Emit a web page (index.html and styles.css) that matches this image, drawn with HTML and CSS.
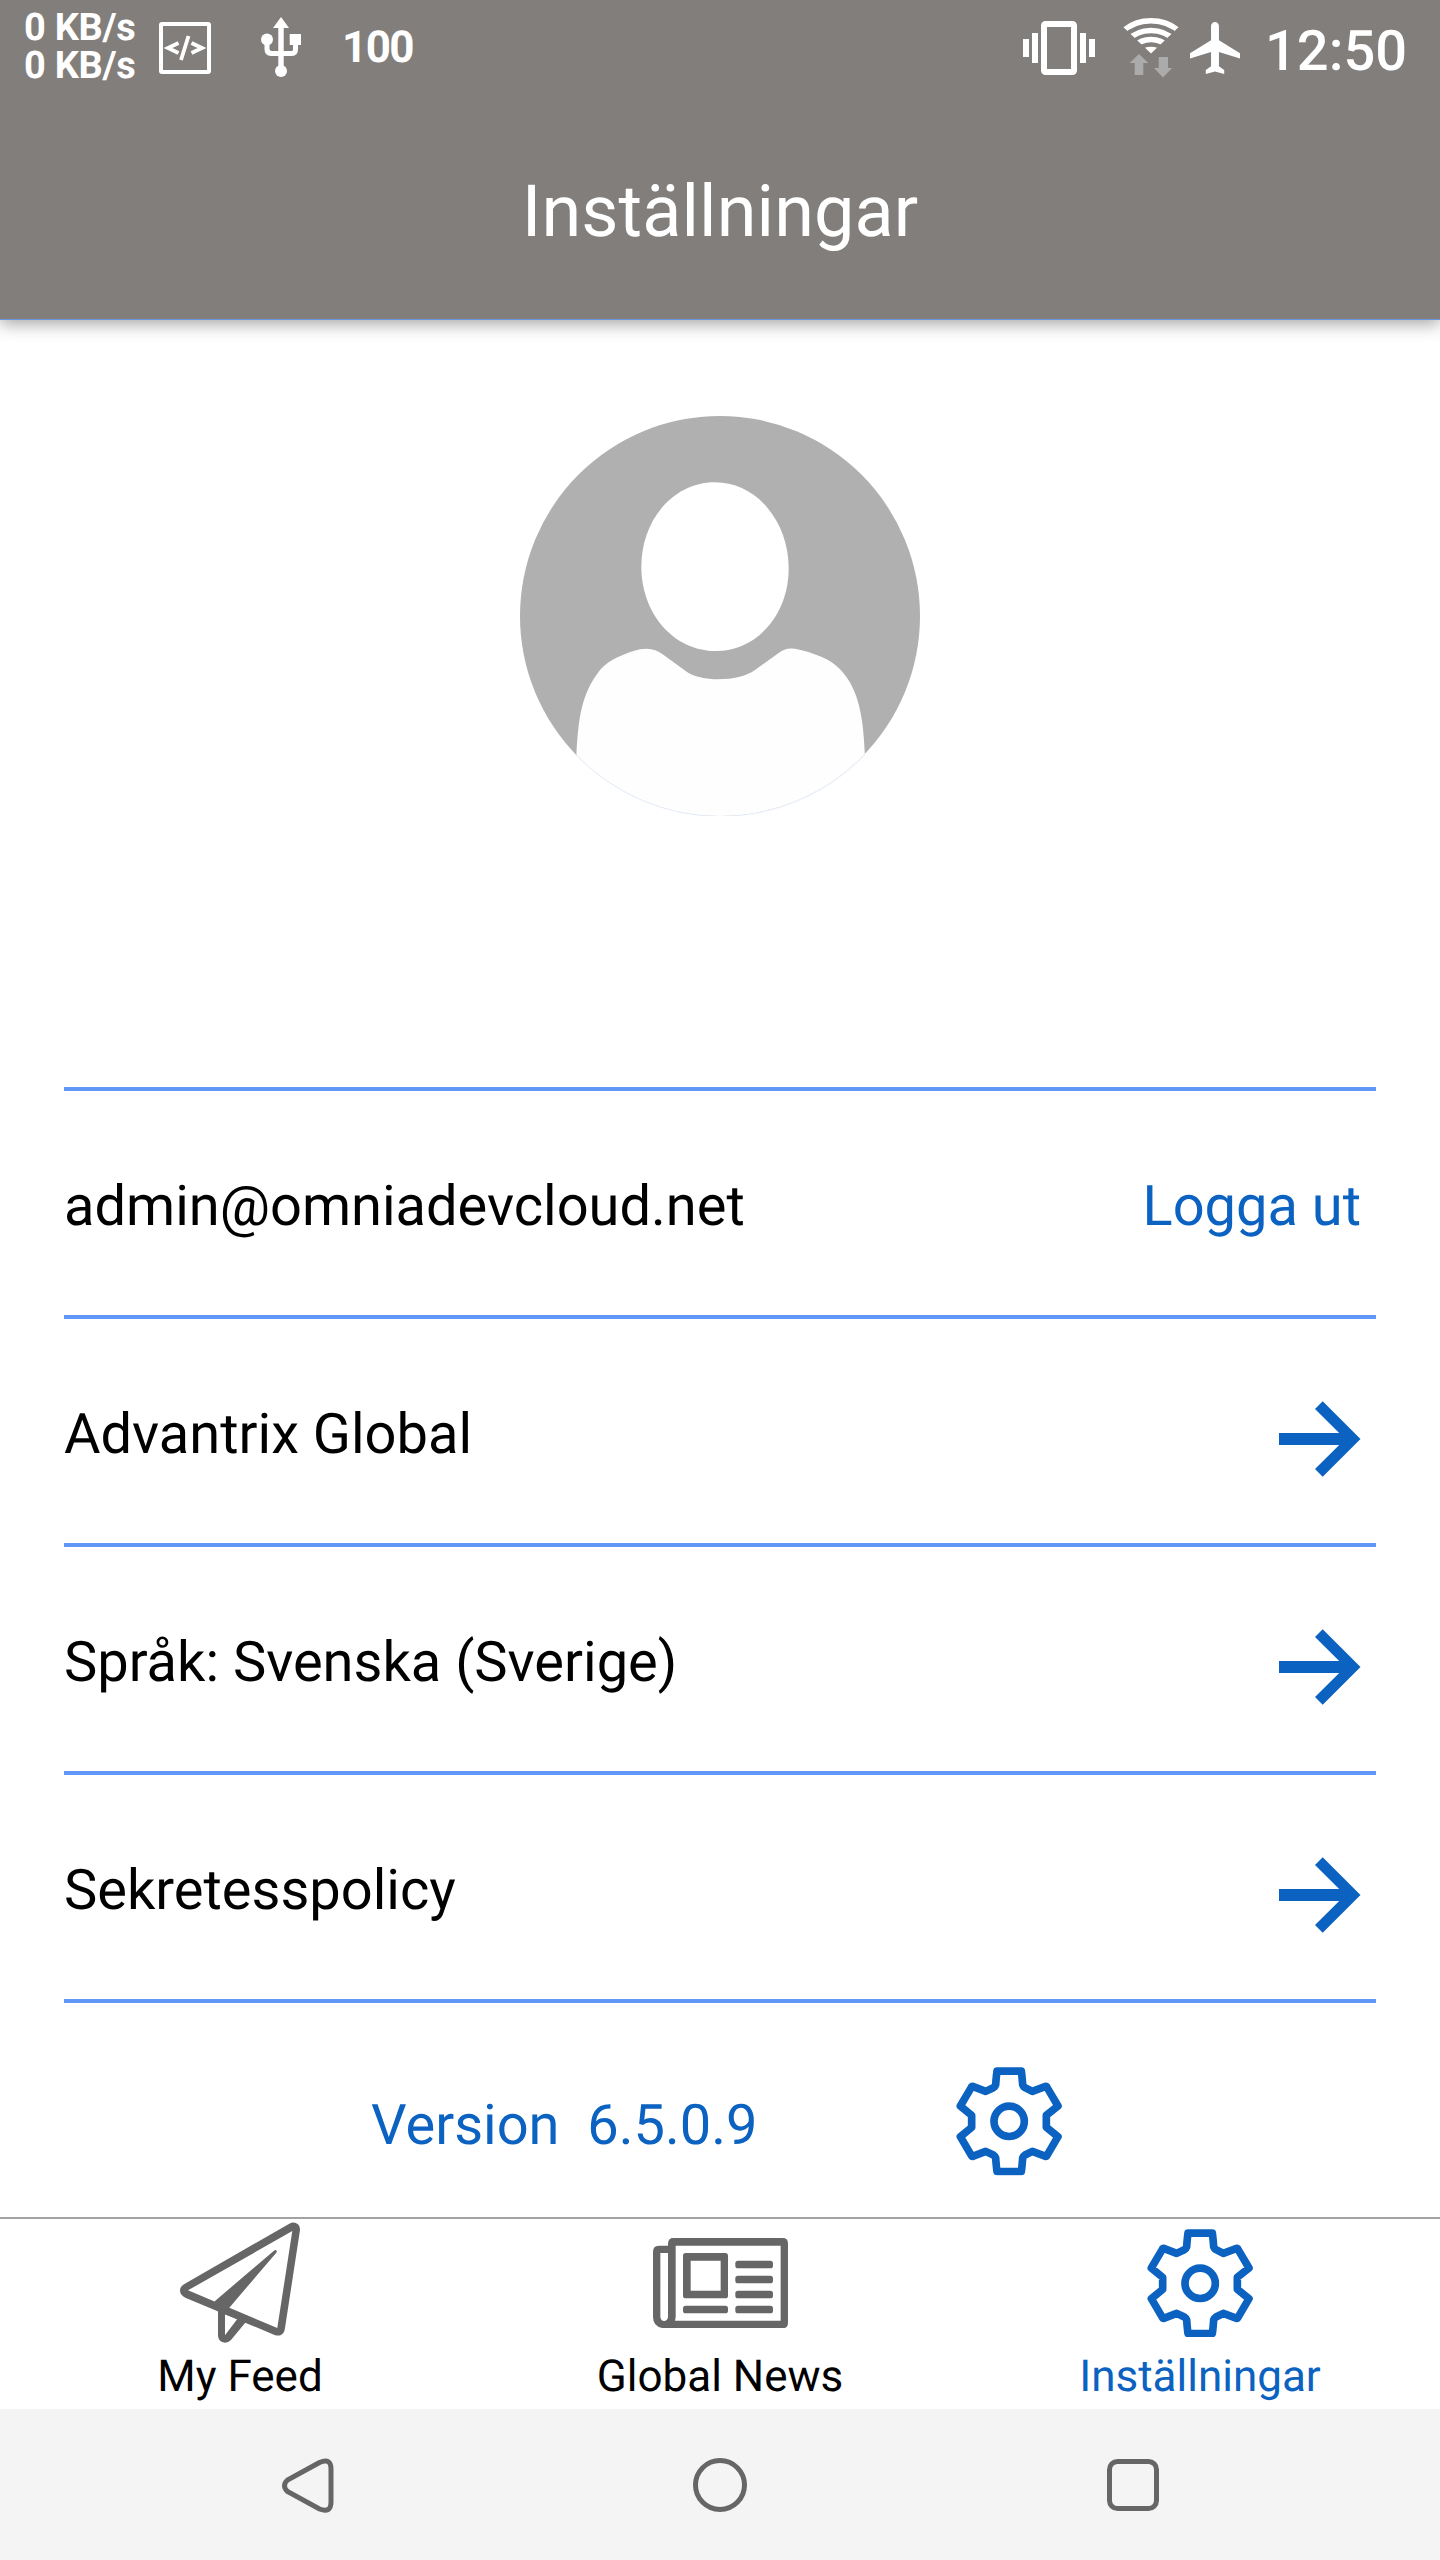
FILE: index.html
```html
<!DOCTYPE html>
<html lang="sv">
<head>
<meta charset="utf-8">
<title>Inställningar</title>
<link rel="stylesheet" href="styles.css">
</head>
<body>
<svg class="defs" aria-hidden="true">
  <symbol id="gear" viewBox="290 86 318 326">
    <path class="gear-line" d="M413 98.500H486Q488 112 490 139Q492 145 497 148L519 159L559 144Q562 144 563 147L596 203L561 231V267L596 295L563 351Q562 354 559 354L519 339L497 350Q492 353 490 359Q488 386 486 399.500H413Q411 386 409 359Q407 353 402 350L379 339L340 354Q337 354 336 351L303 295L337 267V231L303 203L336 147Q337 144 340 144L379 159L402 148Q407 145 409 139Q411 112 413 98.500Z"/>
    <circle class="gear-line" cx="449.500" cy="249" r="45.500"/>
  </symbol>
  <symbol id="arrow" viewBox="0 0 82 76">
    <path d="M81.500 38L43.700 .2L36 8L60.200 32H0V44H60.200L36 68L43.700 75.800Z"/>
  </symbol>
</svg>
<div class="screen">
  <header class="header">
    <div class="statusbar">
      <div class="speed"><span>0 KB/s</span><span>0 KB/s</span></div>
      <svg class="ic-code" viewBox="0 0 52 52"><rect x="2" y="2" width="48" height="48" rx="1" fill="none" stroke="#fff" stroke-width="4"/><path d="M19.500 21L9 26L19.500 31M32.500 21L43 26L32.500 31M29.500 14L22 38" fill="none" stroke="#fff" stroke-width="3.800"/></svg>
      <svg class="ic-usb" viewBox="261 17 40 60"><path d="M281 17L289 28H283.700V51H292Q293 51 293 49V45H289.700V34H301V45H298V49Q298 56 292 56H283.700V67H278.300V56H271Q264.500 56 264.500 49V44H269.500V49Q269.500 51 272 51H278.300V28H273Z"/><circle cx="267" cy="39.500" r="6"/><circle cx="281" cy="71" r="6"/></svg>
      <span class="battery">100</span>
      <span class="spacer"></span>
      <svg class="ic-vibrate" viewBox="1023 21 72 54"><rect x="1044" y="24" width="30" height="48" rx="1.500" fill="none" stroke="#fff" stroke-width="6"/><path d="M1032 33h6v30h-6zM1023 39h6v18h-6zM1080 33h6v30h-6zM1089 39h6v18h-6z"/></svg>
      <svg class="ic-wifi" viewBox="1123 17 56 61"><clipPath id="fan"><path d="M1151 53.500L1118 22V0H1184V22Z"/></clipPath><g clip-path="url(#fan)" fill="none" stroke="#fff" stroke-width="5.500"><circle cx="1151" cy="64.500" r="43.700"/><circle cx="1151" cy="64.500" r="34"/><circle cx="1151" cy="64.500" r="25"/><circle cx="1151" cy="64.500" r="17.800" fill="#fff" stroke="none"/></g><path fill="#ababab" d="M1139 54L1148.300 63H1143.300V75H1134.700V63H1129.700ZM1163 77.500L1154 68H1158.700V57H1168V68H1172Z"/></svg>
      <svg class="ic-plane" viewBox="2 2 19 20" preserveAspectRatio="none"><path d="M21 16v-2l-8-5V3.500c0-.83-.67-1.500-1.500-1.500S10 2.670 10 3.500V9l-8 5v2l8-2.500V19l-2 1.500V22l3.500-1 3.500 1v-1.500L13 19v-5.500l8 2.500z"/></svg>
      <span class="clock">12:50</span>
    </div>
    <h1 class="title">Inställningar</h1>
  </header>

  <main class="content">
    <svg class="avatar" viewBox="60 48 1200 1200">
      <clipPath id="disc"><circle cx="660" cy="648" r="600"/></clipPath>
      <g clip-path="url(#disc)">
        <rect x="60" y="48" width="1200" height="1200" fill="#b0b0b0"/>
        <path fill="#fff" d="M645 247C770 247 866 365 866 505C866 645 770 753 648 753C520 753 424 640 424 500C424 360 520 247 645 247Z"/>
        <path fill="#fefefe" d="M229 1070C235 950 245 880 300 810C330 777 375 760 420 748Q460 740 490 764L560 815C600 845 715 847 765 810L835 760Q855 742 885 746C940 758 990 775 1020 808C1080 870 1090 960 1095 1070V1260H229Z"/>
      </g>
      <path d="M229 1065A600 600 0 0 0 1095 1065" fill="none" stroke="#dfeafd" stroke-width="2"/>
    </svg>

    <ul class="rows">
      <li class="row"><span>admin@omniadevcloud.net</span><a class="logout">Logga ut</a></li>
      <li class="row"><span>Advantrix Global</span><svg class="arrow"><use href="#arrow"/></svg></li>
      <li class="row"><span>Språk: Svenska (Sverige)</span><svg class="arrow"><use href="#arrow"/></svg></li>
      <li class="row"><span>Sekretesspolicy</span><svg class="arrow"><use href="#arrow"/></svg></li>
    </ul>

    <div class="version"><span class="version-text">Version&nbsp; 6.5.0.9</span><svg class="gear"><use href="#gear"/></svg></div>
  </main>

  <nav class="tabs">
    <a class="tab">
      <span class="tab-icon"><svg class="ic-feed" viewBox="240 67 361 363"><path fill-rule="evenodd" d="M252 254L568 72Q582 64 594 74Q601 80 600 92L555 386Q553 402 541 407Q532 409 522 405L256 294Q240 287 240 272Q240 261 252 254ZM264 272L532 385L577 94Z"/><path d="M345 304L522 153Q527 149 530 153Q531 156 529 159L388 324L380 334L340 318Z"/><path fill-rule="evenodd" d="M354 325V408Q356 427 375 429Q385 429 393 421L437 368L420 350L375 330ZM375 344L412 358L375 407Z"/></svg></span>
      <span>My Feed</span>
    </a>
    <a class="tab">
      <span class="tab-icon"><svg class="ic-news" viewBox="219 113 405 271"><path fill-rule="evenodd" d="M264 136V130Q264 113 280 113H608Q624 113 624 129V368Q624 384 608 384H252Q219 380 219 350V154Q219 136 236 136ZM241 158V349Q242 361 252 362Q263 361 264 349V158ZM287 136V350L285 361H602V136ZM317 158H436Q444 158 444 166V286Q444 294 436 294H317Q309 294 309 286V166Q309 158 317 158ZM332 181V271H422V181Z"/><rect x="309" y="316" width="135" height="23" rx="8"/><rect x="466" y="181" width="113" height="23" rx="8"/><rect x="466" y="226" width="113" height="23" rx="8"/><rect x="466" y="271" width="113" height="23" rx="8"/><rect x="466" y="316" width="113" height="23" rx="8"/></svg></span>
      <span>Global News</span>
    </a>
    <a class="tab active">
      <span class="tab-icon"><svg class="gear"><use href="#gear"/></svg></span>
      <span>Inställningar</span>
    </a>
  </nav>

  <div class="sysnav">
    <svg class="ic-back" viewBox="282 2457 52 57"><path d="M319.500 2462.500L287.500 2480Q281.500 2485.500 287.500 2491.500L319.500 2509Q331 2513.500 331 2502V2469Q331 2457.500 319.500 2462.500Z"/></svg>
    <svg class="ic-home" viewBox="0 0 54 54"><circle cx="27" cy="27" r="24.500"/></svg>
    <svg class="ic-recent" viewBox="0 0 52 52"><rect x="2.500" y="2.500" width="47" height="47" rx="8"/></svg>
  </div>
</div>
</body>
</html>
```
FILE: styles.css
```css
* { box-sizing: border-box; }
body { margin: 0; background: #fff; font-family: Roboto, sans-serif; color: #000; text-rendering: geometricPrecision; }
svg { display: block; flex: none; }
.defs { position: absolute; width: 0; height: 0; }
.screen { width: 1440px; height: 2560px; display: flex; flex-direction: column; background: #fff; overflow: hidden; }

.header { height: 320px; background: #827e7c; color: #fff; border-bottom: 1px solid #6c93e0; box-shadow: 0 4px 16px rgba(0, 0, 0, .36); display: flex; flex-direction: column; }
.statusbar { height: 96px; display: flex; align-items: flex-start; padding: 0 34px 0 24px; fill: #fff; }
.speed { width: 135px; padding-top: 9px; display: flex; flex-direction: column; font-size: 38px; line-height: 38px; font-weight: 700; letter-spacing: -.3px; white-space: nowrap; }
.ic-code { width: 52px; height: 52px; margin-top: 22px; }
.ic-usb { width: 40px; height: 60px; margin: 17px 0 0 50px; }
.battery { margin: 23px 0 0 41px; font-size: 44px; line-height: 48px; font-weight: 700; letter-spacing: -1.6px; }
.spacer { flex: 1; }
.ic-vibrate { width: 72px; height: 54px; margin-top: 21px; }
.ic-wifi { width: 56px; height: 61px; margin: 17px 0 0 28px; }
.ic-plane { width: 50px; height: 52px; margin: 22px 0 0 11px; }
.clock { width: 141px; margin: 19px 0 0 25px; font-size: 56px; line-height: 64px; font-weight: 500; white-space: nowrap; }
.title { flex: 1; margin: 0; padding-top: 8px; display: flex; align-items: center; justify-content: center; font-size: 72px; font-weight: 400; letter-spacing: .1px; }

.content { flex: 1; display: flex; flex-direction: column; align-items: center; padding: 96px 64px 0; }
.avatar { width: 400px; height: 400px; }
.rows { width: 100%; list-style: none; margin: 271px 0 0; padding: 0; border-top: 4px solid #6196fa; }
.row { height: 228px; display: flex; align-items: center; justify-content: space-between; padding: 6px 15px 0 0; border-bottom: 4px solid #6196fa; font-size: 56px; }
.logout, .version { color: #0b62c1; }
.arrow { width: 82px; height: 76px; margin-top: 10px; fill: #0b62c1; }
.version { align-self: stretch; display: flex; align-items: flex-start; padding: 64px 0 0 307px; font-size: 56px; }
.version-text { width: 584.500px; padding-top: 25px; line-height: 66px; }
.gear { width: 106px; height: 108.700px; color: #0b62c1; }
.gear-line { fill: none; stroke: currentColor; stroke-width: 23px; stroke-linejoin: round; }

.tabs { height: 192px; border-top: 2px solid #a2a2a2; display: grid; grid-template-columns: repeat(3, 480px); }
.tab { display: flex; flex-direction: column; align-items: center; font-size: 44px; line-height: 52px; fill: #666; }
.tab-icon { height: 131px; display: flex; align-items: flex-start; }
.tab.active { color: #0b62c1; }
.tab .gear { margin-top: 9.500px; }
.ic-feed { width: 120.300px; height: 121px; margin-top: 3.300px; }
.ic-news { width: 135px; height: 90.300px; margin-top: 18.700px; }

.sysnav { height: 151px; background: #f4f4f4; display: flex; align-items: flex-start; padding: 49px 281px 0 282px; justify-content: space-between; fill: none; stroke: #666; stroke-width: 5px; }
.ic-back { width: 52px; height: 57px; margin-top: -1px; }
.ic-home { width: 54px; height: 54px; margin-left: -1px; }
.ic-recent { width: 52px; height: 52px; margin-top: 1px; }
```
